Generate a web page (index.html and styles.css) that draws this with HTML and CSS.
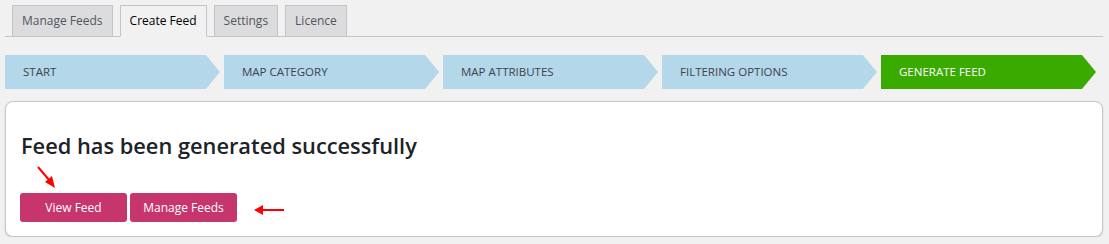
FILE: index.html
```html
<!DOCTYPE html>
<html lang="en">
<head>
    <meta charset="UTF-8">
    <meta name="viewport" content="width=device-width, initial-scale=1.0">
    <title>Create Feed</title>
    <link rel="stylesheet" href="styles.css">
</head>
<body>
    <div class="wrap">
        <nav class="tabs">
            <a class="tab" href="#">Manage Feeds</a>
            <a class="tab active" href="#">Create Feed</a>
            <a class="tab" href="#">Settings</a>
            <a class="tab" href="#">Licence</a>
        </nav>

        <ul class="steps">
            <li class="step">START</li>
            <li class="step">MAP CATEGORY</li>
            <li class="step">MAP ATTRIBUTES</li>
            <li class="step">FILTERING OPTIONS</li>
            <li class="step current">GENERATE FEED</li>
        </ul>

        <div class="card">
            <h2 class="card-title">Feed has been generated successfully</h2>
            <div class="actions">
                <a class="btn" href="#">View Feed</a>
                <a class="btn" href="#">Manage Feeds</a>
            </div>
            <!-- annotation arrows -->
            <svg class="marks" width="300" height="130" viewBox="0 0 300 130">
                <g stroke="#f00" stroke-width="2" fill="#f00">
                    <line x1="32" y1="65" x2="44" y2="79"/>
                    <polygon points="49,86 39,80 46,74" stroke="none"/>
                    <line x1="278" y1="108" x2="256" y2="108"/>
                    <polygon points="248,108 257,103 257,113" stroke="none"/>
                </g>
            </svg>
        </div>
    </div>
</body>
</html>
```

FILE: styles.css
```css
body{
    margin:0;
    padding:0;
    background-color:#f1f1f1;
    font-family:"Open Sans", "Noto Sans", sans-serif;
    color:#1d2327;
}
.wrap{
    padding:0 6px 0 5px;
}
.tabs{
    display:flex;
    padding:5px 0 0 7px;
    border-bottom:1px solid #c3c4c7;
    height:31px;
}
.tab{
    box-sizing:border-box;
    height:32px;
    margin-right:7px;
    padding:0 9px;
    border:1px solid #c3c4c7;
    background:#dcdcde;
    color:#50575e;
    font-size:12px;
    line-height:30px;
    text-decoration:none;
}
.tab.active{
    background:#f1f1f1;
    border-bottom-color:#f1f1f1;
    color:#000;
}
.steps{
    display:flex;
    list-style:none;
    margin:18px 0 0 0;
    padding:0;
}
.step{
    width:215px;
    height:34px;
    margin-right:4px;
    padding-left:18px;
    box-sizing:border-box;
    background:#b4d7ea;
    color:#3c434a;
    font-size:11.5px;
    line-height:34px;
    clip-path:polygon(0 0, calc(100% - 14px) 0, 100% 50%, calc(100% - 14px) 100%, 0 100%);
}
.step.current{
    background:#3aaa00;
    color:#fff;
}
.card{
    position:relative;
    margin-top:12px;
    height:136px;
    box-sizing:border-box;
    padding:29px 14px 0 14px;
    background:#fff;
    border:1px solid #c8c8c8;
    border-radius:8px;
    box-shadow:0 1px 2px rgba(0,0,0,0.15);
}
.card-title{
    margin:0;
    padding-left:1px;
    font-size:21.8px;
    font-weight:600;
    line-height:30px;
    color:#1d2327;
}
.actions{
    display:flex;
    gap:3px;
    margin-top:32px;
}
.btn{
    width:107px;
    height:29px;
    line-height:29px;
    text-align:center;
    background:#c7356d;
    color:#fff;
    font-size:12px;
    text-decoration:none;
    border-radius:3px;
}
.marks{
    position:absolute;
    left:0;
    top:0;
    pointer-events:none;
}
```
